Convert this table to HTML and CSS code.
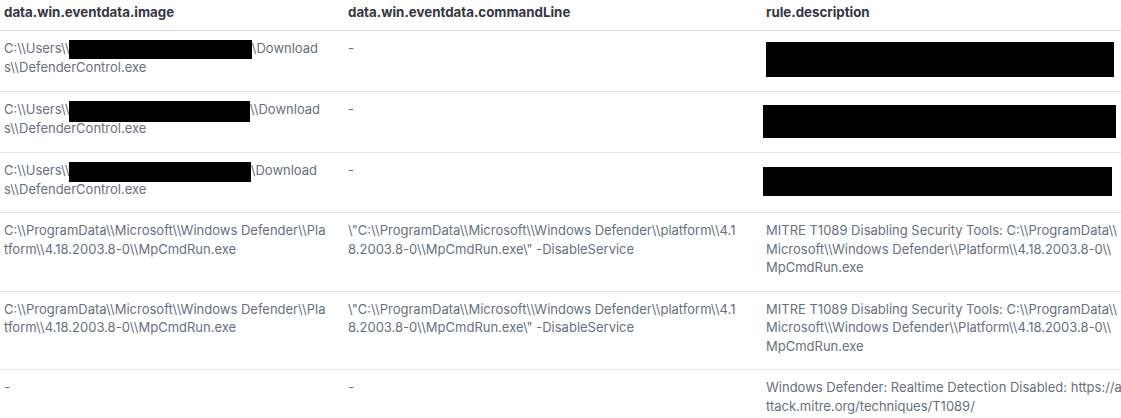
FILE: index.html
```html
<!DOCTYPE html>
<html>
<head>
<meta charset="utf-8">
<link rel="stylesheet" href="styles.css">
</head>
<body>
<table class="doc-table">
  <colgroup>
    <col class="c1">
    <col class="c2">
    <col class="c3">
  </colgroup>
  <thead>
    <tr>
      <th>data.win.eventdata.image</th>
      <th>data.win.eventdata.commandLine</th>
      <th>rule.description</th>
    </tr>
  </thead>
  <tbody>
    <tr>
      <td>C:\\Users\\<span class="redact-inline"></span>\Download<br>s\\DefenderControl.exe</td>
      <td>-</td>
      <td><div class="redact-block r1"></div></td>
    </tr>
    <tr>
      <td>C:\\Users\\<span class="redact-inline r2"></span>\\Download<br>s\\DefenderControl.exe</td>
      <td>-</td>
      <td><div class="redact-block r2"></div></td>
    </tr>
    <tr>
      <td>C:\\Users\\<span class="redact-inline r3"></span>\Download<br>s\\DefenderControl.exe</td>
      <td>-</td>
      <td><div class="redact-block r3"></div></td>
    </tr>
    <tr>
      <td>C:\\ProgramData\\Microsoft\\Windows Defender\\Pla<br>tform\\4.18.2003.8-0\\MpCmdRun.exe</td>
      <td>\"C:\\ProgramData\\Microsoft\\Windows Defender\\platform\\4.1<br>8.2003.8-0\\MpCmdRun.exe\" -DisableService</td>
      <td>MITRE T1089 Disabling Security Tools: C:\\ProgramData\\<br>Microsoft\\Windows Defender\\Platform\\4.18.2003.8-0\\<br>MpCmdRun.exe</td>
    </tr>
    <tr>
      <td>C:\\ProgramData\\Microsoft\\Windows Defender\\Pla<br>tform\\4.18.2003.8-0\\MpCmdRun.exe</td>
      <td>\"C:\\ProgramData\\Microsoft\\Windows Defender\\platform\\4.1<br>8.2003.8-0\\MpCmdRun.exe\" -DisableService</td>
      <td>MITRE T1089 Disabling Security Tools: C:\\ProgramData\\<br>Microsoft\\Windows Defender\\Platform\\4.18.2003.8-0\\<br>MpCmdRun.exe</td>
    </tr>
    <tr>
      <td>-</td>
      <td>-</td>
      <td>Windows Defender: Realtime Detection Disabled: https://a<br>ttack.mitre.org/techniques/T1089/</td>
    </tr>
  </tbody>
</table>
</body>
</html>
```
FILE: styles.css
```css
html, body {
  margin: 0;
  padding: 0;
  background: #ffffff;
}
body {
  font-family: Inter, "Noto Sans", sans-serif;
  font-size: 13px;
  color: #69707d;
  overflow: hidden;
}
.doc-table {
  width: 1121px;
  border-collapse: collapse;
  table-layout: fixed;
}
.c1 { width: 344px; }
.c2 { width: 418px; }
.c3 { width: 359px; }
.doc-table th {
  text-align: left;
  font-size: 13.3px;
  font-weight: 700;
  color: #343741;
  line-height: 18px;
  padding: 3px 4px 9px;
  border-bottom: 1px solid #d3dae6;
  white-space: nowrap;
}
.doc-table td {
  vertical-align: top;
  line-height: 18.5px;
  padding: 8px 4px 14px;
  border-bottom: 1px solid #dfe5ef;
  white-space: nowrap;
}
.redact-inline {
  display: inline-block;
  width: 183px;
  height: 19px;
  margin: -5px 0 -5px -1px;
  background: #000;
  vertical-align: -1px;
}
.redact-inline.r2 { width: 181px; height: 21px; margin: -7px 0 -7px -1px; vertical-align: -1px; }
.redact-inline.r3 { width: 182px; height: 20px; margin: -5px 0 -5px -1px; vertical-align: -2px; }
.redact-block {
  background: #000;
}
.redact-block.r1 { width: 348px; height: 35px; margin-top: 3px; }
.redact-block.r2 { width: 353px; height: 33px; margin-top: 5px; margin-left: -3px; }
.redact-block.r3 { width: 349px; height: 29px; margin-top: 6px; margin-left: -3px; margin-bottom: 2px; }
```
